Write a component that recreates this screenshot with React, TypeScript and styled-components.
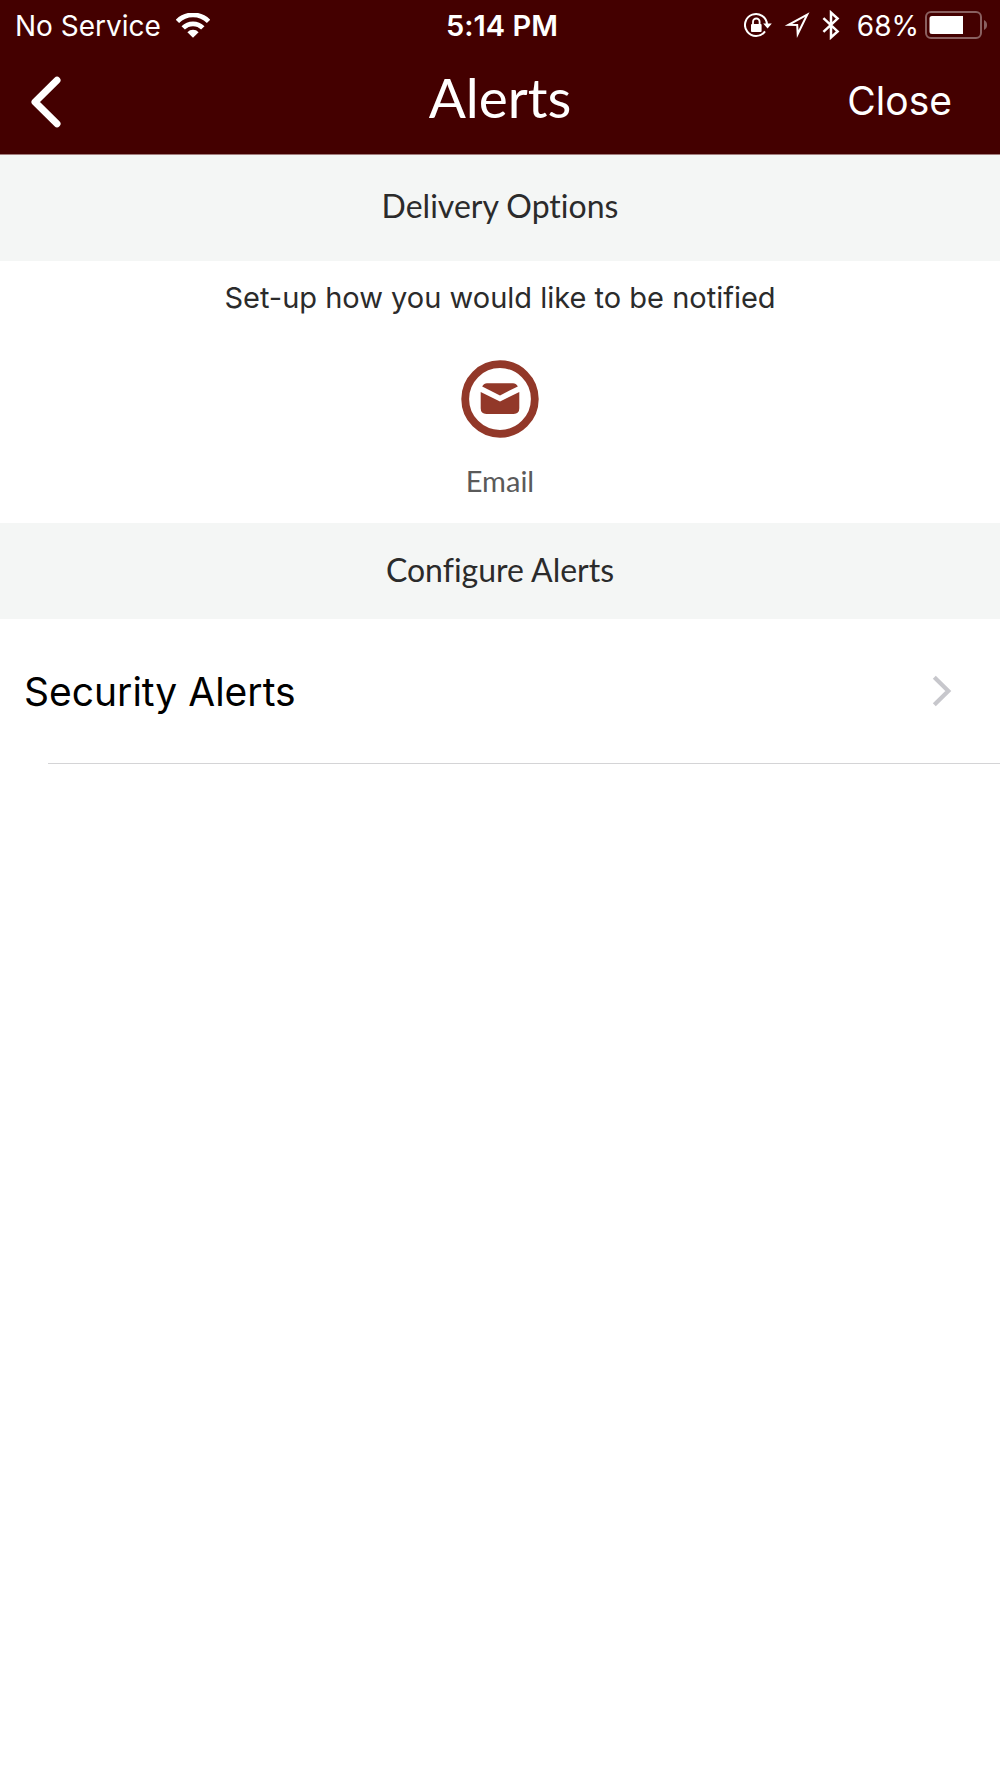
import React from "react";
import styled, { createGlobalStyle } from "styled-components";

const sans = `Inter, "Liberation Sans", sans-serif`;
const humanist = `Lato, "Liberation Sans", sans-serif`;

const GlobalStyle = createGlobalStyle`
  *, *::before, *::after { box-sizing: border-box; }
  body {
    margin: 0;
    background: #ffffff;
    font-family: ${sans};
    font-variant-ligatures: none;
    color: #000000;
  }
`;

const Screen = styled.div`
  display: flex;
  flex-direction: column;
  min-height: 100vh;
`;

const Header = styled.header`
  background: #440000;
  color: #ffffff;
  border-bottom: 1px solid #a27d7d;
`;

const StatusBar = styled.div`
  display: grid;
  grid-template-columns: 1fr auto 1fr;
  align-items: center;
  height: 50px;
  padding: 0 11px 0 15px;
  font-size: 28px;
  line-height: 32px;
`;

const StatusGroup = styled.div<{ $end?: boolean }>`
  display: flex;
  align-items: center;
  justify-content: ${(p) => (p.$end ? "flex-end" : "flex-start")};
  gap: ${(p) => (p.$end ? "12px" : "15px")};
`;

const StatusText = styled.span`
  padding-top: 2px;
`;

const Clock = styled.time`
  padding-top: 2px;
  font-size: 29px;
  font-weight: 600;
`;

const BatteryGroup = styled.span`
  display: flex;
  align-items: center;
  gap: 6px;
  padding-left: 5px;
`;

const Icon = styled.svg`
  display: block;
  flex: none;
`;

const NavBar = styled.nav`
  display: grid;
  grid-template-columns: 1fr auto 1fr;
  align-items: center;
  height: 104px;
  padding: 0 28px;
`;

const BarButton = styled.button<{ $end?: boolean }>`
  justify-self: ${(p) => (p.$end ? "end" : "start")};
  padding: ${(p) => (p.$end ? "0 20px 2px" : "0")};
  border: 0;
  background: none;
  color: inherit;
  font: 400 39px/48px ${sans};
  cursor: pointer;
`;

const Title = styled.h1`
  margin: 0;
  padding-bottom: 10px;
  font: 400 55px/64px ${humanist};
  font-variant-ligatures: none;
`;

const SectionHeading = styled.h2<{ $tall?: boolean }>`
  margin: 0;
  padding: ${(p) => (p.$tall ? "31px 16px 35px" : "27px 16px 29px")};
  background: #f4f6f5;
  color: #2b2b2b;
  text-align: center;
  font: 400 32px/40px ${humanist};
  font-variant-ligatures: none;
`;

const Delivery = styled.section`
  display: flex;
  flex-direction: column;
  align-items: center;
  padding: 17px 16px 22px;
`;

const Hint = styled.p`
  margin: 0 0 42px;
  color: #2b2b2b;
  text-align: center;
  font-size: 29px;
  line-height: 40px;
`;

const Channel = styled.button`
  display: flex;
  flex-direction: column;
  align-items: center;
  gap: 23px;
  padding: 0;
  border: 0;
  background: none;
  color: #5a5a5a;
  font: 400 29px/40px ${humanist};
  cursor: pointer;
`;

const AlertList = styled.ul`
  margin: 0;
  padding: 0;
  list-style: none;
`;

const AlertItem = styled.li`
  &::after {
    content: "";
    display: block;
    height: 1px;
    margin-left: 48px;
    background: #d4d4d6;
  }
`;

const AlertLink = styled.a`
  display: flex;
  align-items: center;
  justify-content: space-between;
  height: 144px;
  padding: 0 48px 0 24px;
  color: #000000;
  text-decoration: none;
  font-size: 39px;
  line-height: 48px;
`;

const AlertName = styled.span`
  padding-top: 2px;
`;

const WifiIcon = () => (
  <Icon width="34" height="25" viewBox="0 0 34 25" fill="none" stroke="#fff" aria-label="Wi-Fi">
    <path d="M1.4 8.4a22 22 0 0 1 31.2 0" strokeWidth="4.8" />
    <path d="M7.2 14.9a13.8 13.8 0 0 1 19.6 0" strokeWidth="4.8" />
    <path d="M17 24.8l-5.6-5.6a7.9 7.9 0 0 1 11.2 0z" fill="#fff" stroke="none" />
  </Icon>
);

const RotationLockIcon = () => (
  <Icon width="28" height="26" viewBox="0 0 28 26" aria-label="Rotation lock">
    <path d="M21 19.3A11 11 0 1 1 23 12.5" fill="none" stroke="#fff" strokeWidth="2" />
    <path d="M19.2 11.4h8.6l-4.2 5z" fill="#fff" />
    <path d="M9 13V9.8a3.3 3.3 0 0 1 6.6 0V13" fill="none" stroke="#fff" strokeWidth="1.8" />
    <rect x="7" y="12" width="10.6" height="8" rx="1" fill="#fff" />
  </Icon>
);

const LocationIcon = () => (
  <Icon width="26" height="26" viewBox="0 0 26 26" aria-label="Location">
    <path
      d="M23.2 2.6L4.500 12.900L13.200 13L13.700 22z"
      fill="none"
      stroke="#fff"
      strokeWidth="2"
      strokeLinejoin="miter"
    />
  </Icon>
);

const BluetoothIcon = () => (
  <Icon width="18" height="30" viewBox="0 0 18 30" aria-label="Bluetooth">
    <path
      d="M1.4 8.2L15.6 21.4L9 27.4V2.6L15.6 8.6L1.4 21.8"
      fill="none"
      stroke="#fff"
      strokeWidth="2.5"
    />
  </Icon>
);

const BatteryIcon = () => (
  <Icon width="64" height="28" viewBox="0 0 64 28" aria-label="Battery">
    <rect x="1" y="1" width="55" height="26" rx="5" fill="none" stroke="#8a6060" strokeWidth="2" />
    <path d="M7 5H38V23H7a2.5 2.5 0 0 1-2.5-2.5V7.5A2.5 2.5 0 0 1 7 5z" fill="#fff" />
    <path d="M59 9a5.6 5.6 0 0 1 0 10z" fill="#8a6060" />
  </Icon>
);

const BackIcon = () => (
  <Icon width="36" height="52" viewBox="0 0 36 52" aria-hidden="true">
    <path
      d="M29 4.2L7 26L29 47.8"
      fill="none"
      stroke="#fff"
      strokeWidth="7"
      strokeLinecap="round"
      strokeLinejoin="round"
    />
  </Icon>
);

const EmailIcon = () => (
  <Icon width="78" height="78" viewBox="0 0 78 78" aria-hidden="true">
    <circle cx="39" cy="39" r="34.8" fill="#fff" stroke="#923829" strokeWidth="7.8" />
    <path d="M21.2 26.4Q23 23.2 26 23.2H52Q55 23.2 56.8 26.4L39 35.4z" fill="#923829" />
    <path d="M19.7 32L39 41.5L58.3 32V48.3Q58.3 54 52.6 54H25.4Q19.7 54 19.7 48.3z" fill="#923829" />
  </Icon>
);

const ChevronIcon = () => (
  <Icon width="20" height="32" viewBox="0 0 20 32" aria-hidden="true">
    <path d="M2.3 2.2L16.3 16L2.3 29.8" fill="none" stroke="#c7c7cc" strokeWidth="4.2" />
  </Icon>
);

export default function App() {
  return (
    <Screen>
      <GlobalStyle />
      <Header>
        <StatusBar>
          <StatusGroup>
            <StatusText>No Service</StatusText>
            <WifiIcon />
          </StatusGroup>
          <Clock>5:14 PM</Clock>
          <StatusGroup $end>
            <RotationLockIcon />
            <LocationIcon />
            <BluetoothIcon />
            <BatteryGroup>
              <StatusText>68%</StatusText>
              <BatteryIcon />
            </BatteryGroup>
          </StatusGroup>
        </StatusBar>
        <NavBar>
          <BarButton type="button" aria-label="Back">
            <BackIcon />
          </BarButton>
          <Title>Alerts</Title>
          <BarButton type="button" $end>
            Close
          </BarButton>
        </NavBar>
      </Header>
      <main>
        <SectionHeading $tall>Delivery Options</SectionHeading>
        <Delivery>
          <Hint>Set-up how you would like to be notified</Hint>
          <Channel type="button">
            <EmailIcon />
            Email
          </Channel>
        </Delivery>
        <SectionHeading>Configure Alerts</SectionHeading>
        <AlertList>
          <AlertItem>
            <AlertLink href="#security-alerts">
              <AlertName>Security Alerts</AlertName>
              <ChevronIcon />
            </AlertLink>
          </AlertItem>
        </AlertList>
      </main>
    </Screen>
  );
}
